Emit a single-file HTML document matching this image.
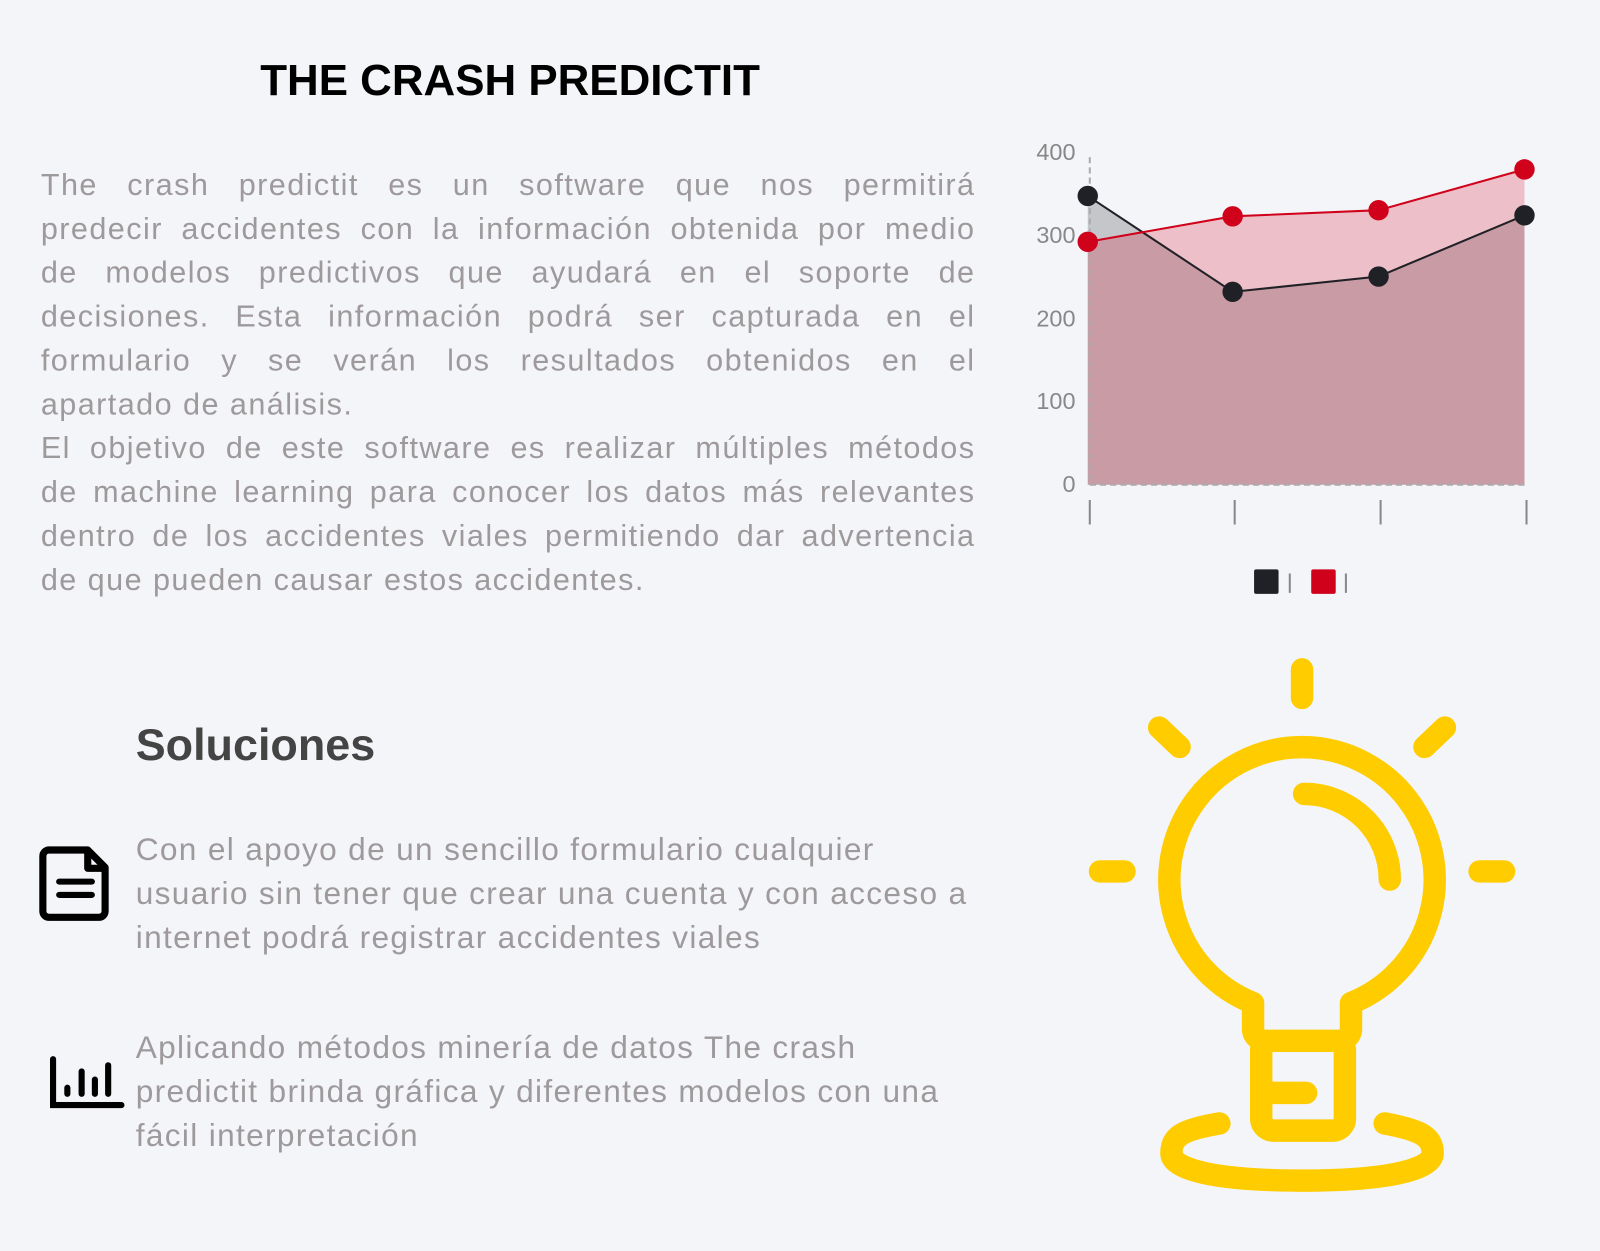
<!DOCTYPE html>
<html><head><meta charset="utf-8"><style>
html,body{margin:0;padding:0;background:#f4f5f9;}
body{width:1600px;height:1251px;position:relative;overflow:hidden;font-family:"Liberation Sans","DejaVu Sans",sans-serif;}
#w{position:absolute;left:0;top:0;width:1568px;height:1226px;transform:scale(1.0204);transform-origin:0 0;}
.t{position:absolute;left:255px;top:55px;font-weight:bold;font-size:43px;color:#000;white-space:nowrap;}
.p{position:absolute;left:40px;top:160px;width:916px;font-size:30px;line-height:43px;color:#9e9a9c;letter-spacing:1.4px;}
.p div{text-align:justify;text-align-last:justify;white-space:nowrap;height:43px;}
.p div.l{text-align-last:left;}
.h{position:absolute;left:133px;top:706px;font-size:44px;font-weight:bold;color:#444;}
.s{position:absolute;left:133px;width:850px;font-size:31px;line-height:43px;color:#9e9a9c;letter-spacing:1.3px;white-space:nowrap;}
</style></head><body><div id="w">
<div class="t">THE CRASH PREDICTIT</div>
<div class="p">
<div>The crash predictit es un software que nos permitirá</div>
<div>predecir accidentes con la información obtenida por medio</div>
<div>de modelos predictivos que ayudará en el soporte de</div>
<div>decisiones. Esta información podrá ser capturada en el</div>
<div>formulario y se verán los resultados obtenidos en el</div>
<div class="l">apartado de análisis.</div>
<div>El objetivo de este software es realizar múltiples métodos</div>
<div>de machine learning para conocer los datos más relevantes</div>
<div>dentro de los accidentes viales permitiendo dar advertencia</div>
<div class="l">de que pueden causar estos accidentes.</div>
</div>
<div class="h">Soluciones</div>
<div class="s" style="top:811px">Con el apoyo de un sencillo formulario cualquier<br>usuario sin tener que crear una cuenta y con acceso a<br>internet podrá registrar accidentes viales</div>
<div class="s" style="top:1005px">Aplicando métodos minería de datos The crash<br>predictit brinda gráfica y diferentes modelos con una<br>fácil interpretación</div>

<svg style="position:absolute;left:0;top:0" width="1568" height="1226">
<g font-family="Liberation Sans, Arial, sans-serif" font-size="23" fill="#888" text-anchor="end">
<text x="1054" y="157">400</text><text x="1054" y="238">300</text><text x="1054" y="320">200</text><text x="1054" y="401">100</text><text x="1054" y="482">0</text>
</g>
<polygon points="1066,192 1208,286 1351,271 1494,211 1494,475 1066,475" fill="rgba(32,33,38,0.22)"/>
<polygon points="1066,237 1208,212 1351,206 1494,166 1494,475 1066,475" fill="rgba(208,0,32,0.22)"/>
<line x1="1068" y1="154" x2="1068" y2="475" stroke="#aaa" stroke-width="2" stroke-dasharray="6,4"/>
<line x1="1068" y1="475" x2="1496" y2="475" stroke="#aaa" stroke-width="2" stroke-dasharray="6,4"/>
<g stroke="#888" stroke-width="2"><line x1="1068" y1="490" x2="1068" y2="514"/><line x1="1210" y1="490" x2="1210" y2="514"/><line x1="1353" y1="490" x2="1353" y2="514"/><line x1="1496" y1="490" x2="1496" y2="514"/></g>
<polyline points="1066,192 1208,286 1351,271 1494,211" fill="none" stroke="#202126" stroke-width="2"/>
<polyline points="1066,237 1208,212 1351,206 1494,166" fill="none" stroke="#d0021b" stroke-width="2"/>
<g fill="#202126"><circle cx="1066" cy="192" r="10"/><circle cx="1208" cy="286" r="10"/><circle cx="1351" cy="271" r="10"/><circle cx="1494" cy="211" r="10"/></g>
<g fill="#d0021b"><circle cx="1066" cy="237" r="10"/><circle cx="1208" cy="212" r="10"/><circle cx="1351" cy="206" r="10"/><circle cx="1494" cy="166" r="10"/></g>
<rect x="1229" y="558" width="24" height="24" rx="2" fill="#202126"/>
<rect x="1285" y="558" width="24" height="24" rx="2" fill="#d0021b"/>
<g stroke="#888" stroke-width="2"><line x1="1264" y1="562" x2="1264" y2="581"/><line x1="1319" y1="562" x2="1319" y2="581"/></g>

<path d="M48,833 H86 L103,850 V893 a6,6 0 0 1 -6,6 H48 a6,6 0 0 1 -6,-6 V839 a6,6 0 0 1 6,-6 Z" fill="none" stroke="#000" stroke-width="7" stroke-linejoin="round"/>
<path d="M86,833 V851 H103" fill="none" stroke="#000" stroke-width="7" stroke-linejoin="round"/>
<g stroke="#000" stroke-width="6" stroke-linecap="round"><line x1="58" y1="864" x2="90" y2="864"/><line x1="58" y1="877" x2="90" y2="877"/></g>
<g stroke="#000" stroke-width="6" stroke-linecap="round" fill="none">
<path d="M52,1038 V1083 H119"/>
<line x1="66" y1="1066" x2="66" y2="1072"/><line x1="80" y1="1050" x2="80" y2="1072"/><line x1="93" y1="1058" x2="93" y2="1072"/><line x1="106" y1="1044" x2="106" y2="1072"/>
</g>

<g stroke="#ffcc00" stroke-width="22" stroke-linecap="round" stroke-linejoin="round" fill="none">
<line x1="1276" y1="656" x2="1276" y2="684"/>
<line x1="1136" y1="713" x2="1156" y2="732"/>
<line x1="1416" y1="713" x2="1396" y2="732"/>
<line x1="1078" y1="854" x2="1102" y2="854"/>
<line x1="1450" y1="854" x2="1474" y2="854"/>
<path d="M1228,983 A130,130 0 1 1 1324,983 V1008 a12,12 0 0 1 -12,12 H1240 a12,12 0 0 1 -12,-12 Z"/>
<path d="M1278,778 A84,84 0 0 1 1362,862"/>
<path d="M1236,1028 V1096 a12,12 0 0 0 12,12 H1306 a12,12 0 0 0 12,-12 V1028"/>
<line x1="1238" y1="1071" x2="1280" y2="1071"/>
<path d="M1195,1101 C1160,1107 1148,1113 1148,1130 C1148,1148 1200,1157 1276,1157 C1352,1157 1404,1148 1404,1130 C1404,1113 1390,1107 1357,1101"/>
</g>
</svg>
</div></body></html>
